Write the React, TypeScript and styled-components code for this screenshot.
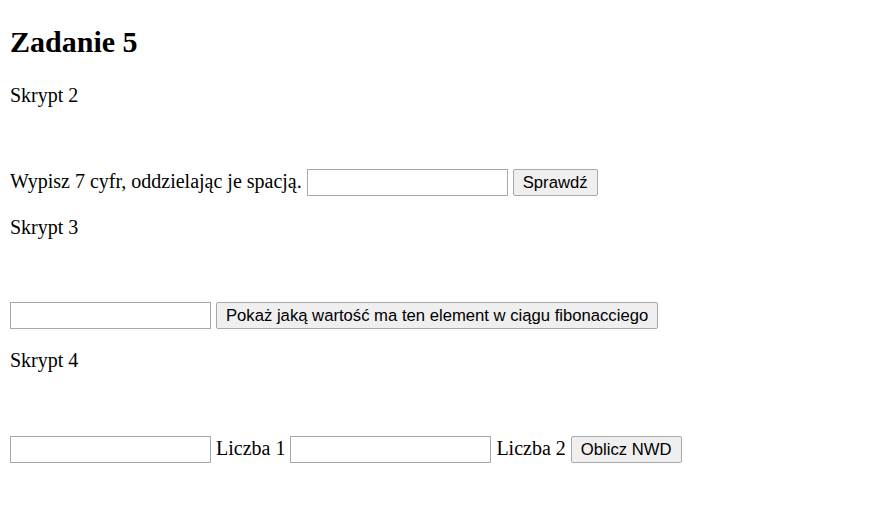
import React from 'react';
import styled, {createGlobalStyle} from "styled-components";

const GlobalStyle = createGlobalStyle`
  body {
    margin: 10px;
    background: #ffffff;
    color: #000000;
    font-family: "Liberation Serif", "Times New Roman", serif;
    font-size: 20px;
  }
`

const Title = styled.h2`
  font-size: 30px;
  font-weight: bold;
  margin: 15px 0 25px;
`
const Label = styled.p`
  margin: 20px 0;
`
const Row = styled.p<{ $gap?: number }>`
  margin: ${props => props.$gap ?? 63}px 0 20px;
`
const Field = styled.input`
  box-sizing: border-box;
  width: 201px;
  height: 27px;
  border: 1px solid #a9a9a9;
  padding: 1px 2px;
  font-family: "Liberation Sans", Arial, sans-serif;
  font-size: 16.67px;
  background: #ffffff;
  vertical-align: baseline;
`
const Button = styled.button`
  box-sizing: border-box;
  height: 27px;
  padding: 1px 9px;
  border: 1px solid #a9a9a9;
  border-radius: 2px;
  background: #efefef;
  color: #000000;
  font-family: "Liberation Sans", Arial, sans-serif;
  font-size: 16.67px;
`

export default function App() {
    return (
        <>
            <GlobalStyle/>
            <Title>Zadanie 5</Title>

            <Label>Skrypt 2</Label>
            <Row $gap={62}>
                Wypisz 7 cyfr, oddzielając je spacją. <Field type="text"/> <Button>Sprawdź</Button>
            </Row>

            <Label>Skrypt 3</Label>
            <Row>
                <Field type="text"/> <Button>Pokaż jaką wartość ma ten element w ciągu fibonacciego</Button>
            </Row>

            <Label>Skrypt 4</Label>
            <Row $gap={64}>
                <Field type="text"/> Liczba 1 <Field type="text"/> Liczba 2 <Button>Oblicz NWD</Button>
            </Row>
        </>
    );
}
